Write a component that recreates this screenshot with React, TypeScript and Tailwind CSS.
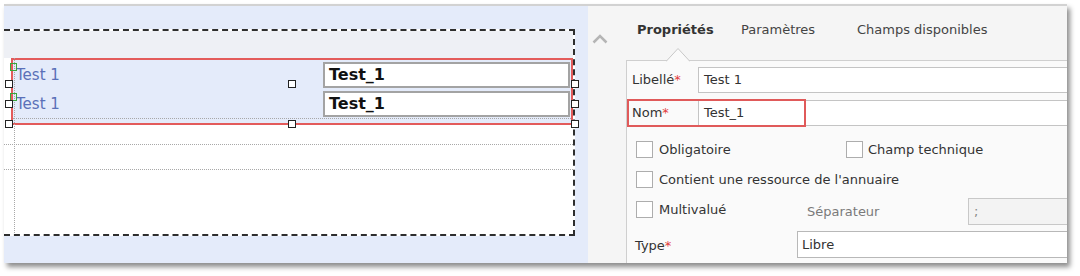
// Form designer window: canvas with a selected group on the left, property sheet on the right.

const FONT = 'font-["DejaVu_Sans",sans-serif]';

const Handle = ({ left, top }: { left: string; top: string }) => (
    <div className={`absolute ${left} ${top} w-[8px] h-[8px] border-[1.5px] border-[#222] bg-white`} />
);

const Checkbox = () => <div className="w-[17px] h-[17px] border border-[#adadad] bg-white flex-shrink-0" />;

const Required = () => <span className="text-[#e23c3c]">*</span>;

function Canvas() {
    return (
        <div className="relative w-[584px] bg-[#e4ebfa] pt-[23px]">
            <div className="relative w-[571px] h-[207px] border-2 border-l-0 border-dashed border-[#2e2e2e] bg-white">
                <div className="h-[27px] bg-[#eef0f5]" />
                {/* selected group */}
                <div className="ml-[7px] h-[67px] border-2 border-[#e35b5b] bg-[#e4ebfa]">
                    {['Test 1', 'Test 1'].map((label, i) => (
                        <div key={i} className="flex items-center h-[29px]">
                            <div className="w-[310px] pl-[3px] pt-[2px] text-[15px] text-[#5a70b8]">{label}</div>
                            <div className="w-[247px] h-[26px] border-2 border-[#a3a3a3] bg-white flex items-center pl-[4px] font-bold text-[16px] text-[#111]">
                                Test_1
                            </div>
                        </div>
                    ))}
                    <div className="border-b border-dotted border-[#a8a8a8]" />
                </div>
                <div className="h-[20px] border-b border-dotted border-[#a8a8a8]" />
                <div className="h-[25px] border-b border-dotted border-[#a8a8a8]" />
                {/* column guide */}
                <div className="absolute left-[10px] top-[27px] bottom-[1px] border-l border-dotted border-[#a8a8a8]" />
            </div>

            {/* green anchors */}
            <div className="absolute left-[6px] top-[57px] w-[7px] h-[8px] border border-[#3aa53a]" />
            <div className="absolute left-[6px] top-[87px] w-[7px] h-[8px] border border-[#3aa53a]" />

            <Handle left="left-[1px]" top="top-[74px]" />
            <Handle left="left-[1px]" top="top-[94px]" />
            <Handle left="left-[1px]" top="top-[114px]" />
            <Handle left="left-[284px]" top="top-[74px]" />
            <Handle left="left-[284px]" top="top-[114px]" />
            <Handle left="left-[567px]" top="top-[74px]" />
            <Handle left="left-[567px]" top="top-[94px]" />
            <Handle left="left-[567px]" top="top-[114px]" />
        </div>
    );
}

function PropertySheet() {
    return (
        <div className="flex-1 flex bg-[#f5f5f5] text-[13px] text-[#333] min-w-0">
            <div className="w-[38px] flex-shrink-0 pt-[27px] pl-[4px]">
                <svg width="16" height="11" viewBox="0 0 16 11">
                    <path d="M1.5 9.5 L8 3 L14.5 9.5" fill="none" stroke="#b5b5b5" strokeWidth="2.5" />
                </svg>
            </div>
            <div className="flex-1 flex flex-col min-w-0">
                <div className="h-[54px] flex pt-[16px] pl-[11px] leading-[16px]">
                    <div className="w-[104px] font-bold text-[#333]">Propriétés</div>
                    <div className="w-[116px] text-[#444]">Paramètres</div>
                    <div className="text-[#444]">Champs disponibles</div>
                </div>
                <div className="relative flex-1 border-l border-t border-[#cfcfcf] bg-[#fafafa] pl-[5px] pt-[6px]">
                    {/* tab pointer */}
                    <svg className="absolute left-[39px] top-[-14px]" width="24" height="15" viewBox="0 0 24 15">
                        <path d="M0 14.5 L12 1.5 L24 14.5 Z" fill="#fafafa" />
                        <path d="M0 14.5 L12 1.5 L24 14.5" fill="none" stroke="#c8c8c8" strokeWidth="1" />
                    </svg>

                    <div className="flex items-center h-[26px]">
                        <div className="w-[66px]">Libellé<Required /></div>
                        <div className="flex-1 h-full border border-r-0 border-[#c4c4c4] bg-white flex items-center pl-[5px]">Test 1</div>
                    </div>
                    <div className="flex items-center h-[26px] mt-[7px]">
                        <div className="w-[66px]">Nom<Required /></div>
                        <div className="flex-1 h-full border border-r-0 border-[#c4c4c4] bg-white flex items-center pl-[5px]">Test_1</div>
                    </div>
                    <div className="absolute left-0 top-[38px] w-[179px] h-[28px] border-2 border-[#e05a5a]" />

                    <div className="flex items-center h-[17px] mt-[15px] pl-[4px]">
                        <div className="w-[210px] flex items-center gap-[6px]"><Checkbox />Obligatoire</div>
                        <div className="flex items-center gap-[5px]"><Checkbox />Champ technique</div>
                    </div>
                    <div className="flex items-center h-[17px] mt-[13px] pl-[4px] gap-[6px]">
                        <Checkbox />Contient une ressource de l'annuaire
                    </div>
                    <div className="flex items-center h-[27px] mt-[10px] pl-[4px]">
                        <div className="w-[171px] flex items-center gap-[6px] pb-[4px]"><Checkbox />Multivalué</div>
                        <div className="w-[161px] text-[#7a7a7a]">Séparateur</div>
                        <div className="flex-1 h-full border border-r-0 border-[#c8c8c8] bg-[#f3f3f3] flex items-center pl-[5px] text-[#888]">;</div>
                    </div>
                    <div className="flex items-center h-[27px] mt-[6px]">
                        <div className="w-[165px] pl-[3px] pt-[2px]">Type<Required /></div>
                        <div className="flex-1 h-full border border-r-0 border-[#b8b8b8] bg-white flex items-center pl-[4px]">Libre</div>
                    </div>
                </div>
            </div>
        </div>
    );
}

export default function App() {
    return (
        <div className={`w-[1080px] h-[276px] bg-white pl-[4px] pt-[4px] ${FONT}`}>
            <div className="w-[1063px] h-[259px] flex border-t-2 border-[#d2d2d2] shadow-[3px_4px_5px_rgba(0,0,0,0.45)] overflow-hidden">
                <Canvas />
                <PropertySheet />
            </div>
        </div>
    );
}
